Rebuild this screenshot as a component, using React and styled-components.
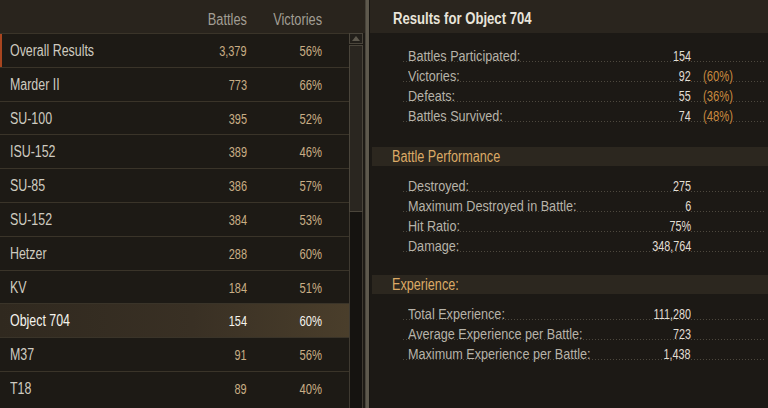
import React from 'react';
import styled, { createGlobalStyle, css } from 'styled-components';

const Global = createGlobalStyle`
  html, body { margin: 0; padding: 0; background: #1c1915; }
  body {
    font-family: "Liberation Sans", Arial, sans-serif;
    font-size: 15px;
  }
  * { box-sizing: border-box; }
`;

const vehicles = [
  { name: 'Overall Results', battles: '3,379', wins: '56%', overall: true },
  { name: 'Marder II', battles: '773', wins: '66%' },
  { name: 'SU-100', battles: '395', wins: '52%' },
  { name: 'ISU-152', battles: '389', wins: '46%' },
  { name: 'SU-85', battles: '386', wins: '57%' },
  { name: 'SU-152', battles: '384', wins: '53%' },
  { name: 'Hetzer', battles: '288', wins: '60%' },
  { name: 'KV', battles: '184', wins: '51%' },
  { name: 'Object 704', battles: '154', wins: '60%', selected: true },
  { name: 'M37', battles: '91', wins: '56%' },
  { name: 'T18', battles: '89', wins: '40%' },
];

const sections = [
  {
    title: null,
    gap: 9,
    rows: [
      ['Battles Participated:', '154', null],
      ['Victories:', '92', '(60%)'],
      ['Defeats:', '55', '(36%)'],
      ['Battles Survived:', '74', '(48%)'],
    ],
  },
  {
    title: 'Battle Performance',
    gap: 25,
    rows: [
      ['Destroyed:', '275', null],
      ['Maximum Destroyed in Battle:', '6', null],
      ['Hit Ratio:', '75%', null],
      ['Damage:', '348,764', null],
    ],
  },
  {
    title: 'Experience:',
    gap: 23,
    rows: [
      ['Total Experience:', '111,280', null],
      ['Average Experience per Battle:', '723', null],
      ['Maximum Experience per Battle:', '1,438', null],
    ],
  },
];

/* Condensed rendering of the UI font (the original uses a narrow face) */
const Narrow = styled.span`
  display: inline-block;
  white-space: nowrap;
  transform: scaleX(${(p) => p.$sx ?? 0.82});
  transform-origin: ${(p) => (p.$right ? 'right' : 'left')} center;
`;

const Screen = styled.div`
  width: 768px;
  height: 408px;
  display: flex;
  overflow: hidden;
  background: #5e594d;
`;

const LeftPanel = styled.div`
  width: 366px;
  flex: 0 0 366px;
  display: flex;
  flex-direction: column;
  background: #1d1a15;
  border-right: 1px solid #47433a;
`;

const columns = css`
  display: grid;
  grid-template-columns: 187px 60px 75px;
`;

const TableHeader = styled.div`
  ${columns};
  height: 33px;
  padding-top: 7px;
  line-height: 26px;
  background: #29241d;
  color: #a29e94;
  font-size: 16px;
`;

const HeadCell = styled.div`
  grid-column: ${(p) => p.$col};
  text-align: right;
`;

const TableBody = styled.div`
  flex: 1;
  display: flex;
  min-height: 0;
`;

const Rows = styled.div`
  width: 349px;
  flex: 0 0 349px;
  display: flex;
  flex-direction: column;
`;

const Row = styled.div`
  ${columns};
  height: 33.8px;
  flex: 0 0 33.8px;
  line-height: 33px;
  border-top: 1px solid #3a3429;
  color: ${(p) => (p.$selected ? '#f6f4ee' : '#cfcbc0')};
  background: ${(p) =>
    p.$selected
      ? 'linear-gradient(90deg, #30291f 0%, #393024 55%, #4a3e2b 100%)'
      : 'transparent'};
  box-shadow: ${(p) => (p.$overall ? 'inset 2px 0 0 #a8451f' : 'none')};
`;

const NameCell = styled.div`
  padding-left: 10px;
  font-size: 16px;
`;

const NumCell = styled.div`
  text-align: right;
  color: ${(p) => (p.$selected ? '#f6f4ee' : '#c9ae85')};
`;

const Scrollbar = styled.div`
  width: 14px;
  flex: 0 0 14px;
  display: flex;
  flex-direction: column;
`;

const ArrowButton = styled.div`
  height: 11px;
  border: 1px solid #4a453b;
  background: #221f1a;
  display: flex;
  align-items: center;
  justify-content: center;
`;

const Track = styled.div`
  flex: 1;
  margin-top: 1px;
  border-left: 1px solid #3f3a31;
  border-right: 1px solid #3f3a31;
  background: #151310;
  display: flex;
  flex-direction: column;
`;

const Thumb = styled.div`
  height: 167px;
  border: 1px solid #4a453b;
  margin: 0 -1px;
  background: #2a2620;
`;

const RightPanel = styled.div`
  flex: 1;
  margin-left: 3px;
  border-left: 1px solid #171511;
  background: #1c1915;
  display: flex;
  flex-direction: column;
`;

const TitleBar = styled.div`
  height: 33px;
  padding: 4px 0 0 23px;
  line-height: 29px;
  font-weight: bold;
  font-size: 16px;
  color: #e8e4da;
  background: #2a251e;
`;

const Section = styled.div`
  margin-top: ${(p) => p.$gap}px;
  display: flex;
  flex-direction: column;
`;

const SectionBar = styled.div`
  height: 19px;
  line-height: 19px;
  margin-left: 2px;
  margin-bottom: 6px;
  padding-left: 20px;
  font-size: 16px;
  color: #dcaa66;
  background: #2c271f;
`;

const StatList = styled.div`
  margin: 0 3px 0 33px;
  display: flex;
  flex-direction: column;
`;

const StatRow = styled.div`
  height: 20px;
  display: flex;
  align-items: flex-end;
  line-height: 13px;
  padding-left: 5px;
  font-size: 15.5px;
  background: linear-gradient(90deg, #4d483e 1px, transparent 1px) left bottom / 3px 1px repeat-x;
`;

const StatLabel = styled.div`
  width: 220px;
  color: #b7b3a9;
`;

const StatValue = styled.div`
  width: 63px;
  text-align: right;
  color: #e2ded4;
  font-size: 15px;
`;

const StatPercent = styled.div`
  margin-left: 12px;
  color: #c98a3f;
  font-size: 15px;
`;

function ArrowUp() {
  return (
    <svg width="8" height="5" viewBox="0 0 8 5">
      <path d="M4 0 L8 5 L0 5 Z" fill="#5d584d" />
    </svg>
  );
}

export default function App() {
  return (
    <>
      <Global />
      <Screen>
        <LeftPanel>
          <TableHeader>
            <HeadCell $col={2}>
              <Narrow $right $sx={0.8}>Battles</Narrow>
            </HeadCell>
            <HeadCell $col={3}>
              <Narrow $right $sx={0.8}>Victories</Narrow>
            </HeadCell>
          </TableHeader>
          <TableBody>
            <Rows>
              {vehicles.map((v) => (
                <Row key={v.name} $selected={v.selected} $overall={v.overall}>
                  <NameCell>
                    <Narrow $sx={0.775}>{v.name}</Narrow>
                  </NameCell>
                  <NumCell $selected={v.selected}>
                    <Narrow $right $sx={0.73}>{v.battles}</Narrow>
                  </NumCell>
                  <NumCell $selected={v.selected}>
                    <Narrow $right $sx={0.75}>{v.wins}</Narrow>
                  </NumCell>
                </Row>
              ))}
            </Rows>
            <Scrollbar>
              <ArrowButton>
                <ArrowUp />
              </ArrowButton>
              <Track>
                <Thumb />
              </Track>
            </Scrollbar>
          </TableBody>
        </LeftPanel>
        <RightPanel>
          <TitleBar>
            <Narrow>Results for Object 704</Narrow>
          </TitleBar>
          {sections.map((s, i) => (
            <Section key={i} $gap={s.gap}>
              {s.title && (
                <SectionBar>
                  <Narrow $sx={0.79}>{s.title}</Narrow>
                </SectionBar>
              )}
              <StatList>
                {s.rows.map(([label, value, pct]) => (
                  <StatRow key={label}>
                    <StatLabel>
                      <Narrow $sx={0.815}>{label}</Narrow>
                    </StatLabel>
                    <StatValue>
                      <Narrow $right $sx={0.72}>{value}</Narrow>
                    </StatValue>
                    {pct && (
                      <StatPercent>
                        <Narrow $sx={0.75}>{pct}</Narrow>
                      </StatPercent>
                    )}
                  </StatRow>
                ))}
              </StatList>
            </Section>
          ))}
        </RightPanel>
      </Screen>
    </>
  );
}
